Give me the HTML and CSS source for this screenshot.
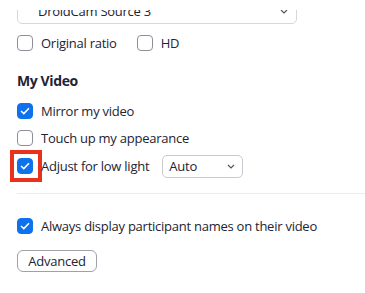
FILE: index.html
```html
<!DOCTYPE html>
<html>
<head>
  <title>Video Settings</title>
  <link rel="stylesheet" href="styles.css">
</head>
<body>
  <div class="settings">
    <div class="crop">
      <div class="camera-select">
        <span>DroidCam Source 3</span>
        <svg class="chevron" width="8" height="5" viewBox="0 0 8 5"><path d="M1 1 L4 4 L7 1" fill="none" stroke="#555" stroke-width="1.2"/></svg>
      </div>
    </div>

    <div class="row first">
      <label class="option"><span class="box"></span>Original ratio</label>
      <label class="option hd"><span class="box"></span>HD</label>
    </div>

    <h3>My Video</h3>

    <label class="option line"><span class="box checked"><svg width="10" height="8" viewBox="0 0 10 8"><path d="M1 4 L3.8 6.6 L9 1.2" fill="none" stroke="#fff" stroke-width="1.5"/></svg></span>Mirror my video</label>
    <label class="option line"><span class="box"></span>Touch up my appearance</label>
    <div class="row light">
      <label class="option"><span class="highlight"><span class="box checked"><svg width="10" height="8" viewBox="0 0 10 8"><path d="M1 4 L3.8 6.6 L9 1.2" fill="none" stroke="#fff" stroke-width="1.5"/></svg></span></span>Adjust for low light</label>
      <div class="mini-select">
        <span>Auto</span>
        <svg class="chevron" width="8" height="5" viewBox="0 0 8 5"><path d="M1 1 L4 4 L7 1" fill="none" stroke="#555" stroke-width="1.2"/></svg>
      </div>
    </div>

    <div class="divider"></div>

    <label class="option names"><span class="box checked"><svg width="10" height="8" viewBox="0 0 10 8"><path d="M1 4 L3.8 6.6 L9 1.2" fill="none" stroke="#fff" stroke-width="1.5"/></svg></span>Always display participant names on their video</label>

    <button class="advanced">Advanced</button>
  </div>
</body>
</html>
```

FILE: styles.css
```css
body {
  margin: 0;
  background-color: #fff;
  font-family: "Open Sans", "Noto Sans", sans-serif;
  font-size: 13px;
  letter-spacing: -0.25px;
  color: #232333;
}

.settings {
  padding-left: 17px;
  display: flex;
  flex-direction: column;
  align-items: flex-start;
}

/* the screenshot cuts the top of the camera dropdown */
.crop {
  margin-top: 10px;
  height: 14px;
  overflow: hidden;
}

.camera-select {
  box-sizing: border-box;
  width: 280px;
  height: 26px;
  margin-top: -12px;
  border: 1px solid #d6d6dc;
  border-radius: 5px;
  display: flex;
  align-items: center;
  justify-content: space-between;
  padding: 0 8px 0 20px;
}

.row {
  display: flex;
  align-items: center;
}

.row.first {
  margin-top: 11px;
  height: 16px;
}

.option {
  display: flex;
  align-items: center;
  gap: 8px;
  height: 16px;
}

.option.hd {
  margin-left: 20px;
}

.box {
  box-sizing: border-box;
  width: 16px;
  height: 16px;
  border: 1px solid #8e8e99;
  border-radius: 4px;
  display: flex;
  align-items: center;
  justify-content: center;
  flex-shrink: 0;
}

.box.checked {
  background-color: #0e72ed;
  border-color: #0e72ed;
}

h3 {
  margin: 21px 0 0;
  font-size: 14px;
  line-height: 18px;
  font-weight: bold;
  letter-spacing: -0.4px;
}

.option.line {
  margin-top: 13px;
}

.option.line + .option.line {
  margin-top: 11px;
}

.row.light {
  margin-top: 8px;
  height: 24px;
}

.highlight {
  display: flex;
  margin: -8px -9px -8px -7px;
  padding: 4px 5px 4px 3px;
  border: 4px solid #e8321e;
}

.mini-select {
  box-sizing: border-box;
  width: 81px;
  height: 23px;
  margin-left: 13px;
  border: 1px solid #c9c9d0;
  border-radius: 5px;
  display: flex;
  align-items: center;
  justify-content: space-between;
  padding: 0 7px 0 6px;
}

.divider {
  align-self: stretch;
  height: 1px;
  margin-top: 15px;
  background-color: #ececf0;
}

.option.names {
  margin-top: 24px;
}

.advanced {
  margin-top: 16px;
  width: 80px;
  height: 22px;
  padding: 0;
  font-family: inherit;
  font-size: 13px;
  letter-spacing: -0.25px;
  color: #232333;
  background-color: #fff;
  border: 1px solid #a0a0a8;
  border-radius: 6px;
}
```
